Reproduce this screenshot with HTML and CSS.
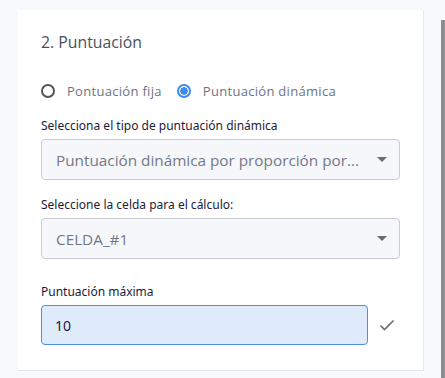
FILE: index.html
```html
<!DOCTYPE html>
<html lang="es">
  <head>
    <meta charset="UTF-8" />
    <title>Puntuación</title>
    <link rel="stylesheet" href="styles.css">
  </head>
  <body>
    <div class="page">
      <div class="card">
        <h3 class="title">2. Puntuación</h3>

        <div class="radios">
          <label class="radio">
            <span class="dot"></span>
            Pontuación fija
          </label>
          <label class="radio checked">
            <span class="dot"></span>
            Puntuación dinámica
          </label>
        </div>

        <div class="field">
          <label class="field-label">Selecciona el tipo de puntuación dinámica</label>
          <div class="select">
            <span class="select-text">Puntuación dinámica por proporción por...</span>
            <span class="caret"></span>
          </div>
        </div>

        <div class="field">
          <label class="field-label">Seleccione la celda para el cálculo:</label>
          <div class="select">
            <span class="select-text">CELDA_#1</span>
            <span class="caret"></span>
          </div>
        </div>

        <div class="field field-last">
          <label class="field-label">Puntuación máxima</label>
          <div class="input-row">
            <div class="input">10</div>
            <svg class="check" width="16" height="12" viewBox="0 0 16 12">
              <path d="M1.5 6.5 L5.5 10.5 L14.5 1.5" fill="none" stroke="#6b6b6b" stroke-width="1.6" />
            </svg>
          </div>
        </div>
      </div>
    </div>
    <div class="scroll-track">
      <div class="scroll-thumb"></div>
    </div>
  </body>
</html>
```

FILE: styles.css
```css
/* General */
body {
  margin: 0;
  background: #f8f9fb;
  font-family: "Open Sans", "Noto Sans", sans-serif;
  display: flex;
  height: 378px;
  overflow: hidden;
}

.page {
  width: 441px;
  padding: 10px 0 0 18px;
  box-sizing: border-box;
}

/* Card */
.card {
  width: 406px;
  height: 361px;
  box-sizing: border-box;
  background: #ffffff;
  border-right: 1px solid #e8e9ec;
  border-bottom: 1px solid #e6e7ea;
  padding: 21px 23px 0 23px;
}

.title {
  margin: 0;
  font-size: 15.8px;
  font-weight: 400;
  line-height: 22px;
  color: #4b5060;
}

/* Radios */
.radios {
  display: flex;
  gap: 15px;
  margin-top: 28px;
  height: 20px;
  align-items: center;
}

.radio {
  display: flex;
  align-items: center;
  gap: 12px;
  font-size: 13px;
  color: #6e7382;
  letter-spacing: 0.3px;
}

.dot {
  width: 14px;
  height: 14px;
  box-sizing: border-box;
  border: 2px solid #555;
  border-radius: 50%;
  display: inline-block;
}

.radio.checked .dot {
  border-color: #3d8bea;
  background: radial-gradient(circle, #3d8bea 0 3.5px, #fff 4px);
}

/* Fields */
.field {
  margin-top: 17px;
}

.field-label {
  display: block;
  font-family: "Noto Sans", sans-serif;
  font-size: 12px;
  line-height: 16px;
  color: #1b1b3a;
  margin-bottom: 5px;
}

.select {
  height: 41px;
  box-sizing: border-box;
  border: 1px solid #c9cdd3;
  border-radius: 4px;
  background: #f5f7fa;
  display: flex;
  align-items: center;
  padding: 0 12px 0 14px;
}

.select-text {
  flex: 1;
  font-size: 15.3px;
  color: #737888;
  white-space: nowrap;
  overflow: hidden;
}

.caret {
  width: 0;
  height: 0;
  border-left: 5px solid transparent;
  border-right: 5px solid transparent;
  border-top: 5px solid #6b6b6b;
}

.field-last {
  margin-top: 25px;
}

.input-row {
  display: flex;
  align-items: center;
}

.input {
  width: 327px;
  height: 40px;
  box-sizing: border-box;
  background: #dfeafb;
  border: 1px solid #4a90e2;
  border-radius: 4px;
  padding: 0 13px;
  display: flex;
  align-items: center;
  font-family: "Noto Sans", sans-serif;
  font-size: 14px;
  color: #1b1b3a;
}

.check {
  margin-left: 11px;
}

/* Scrollbar */
.scroll-track {
  width: 4px;
  padding-top: 20px;
}

.scroll-thumb {
  background: #8d8d8d;
  height: 358px;
}
```
